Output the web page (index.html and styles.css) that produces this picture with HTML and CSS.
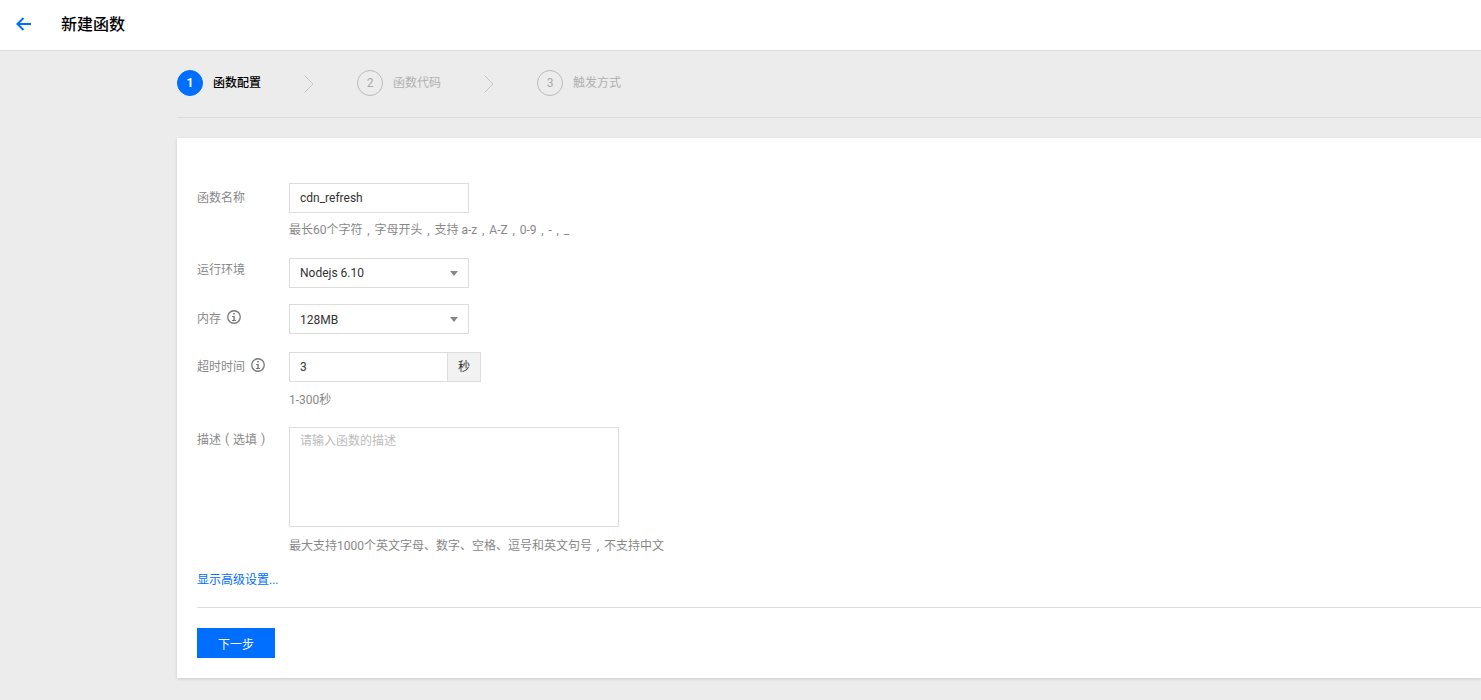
FILE: index.html
```html
<!DOCTYPE html>
<html lang="zh-CN">
<head>
<meta charset="utf-8">
<title>新建函数</title>
<link rel="stylesheet" href="styles.css">
</head>
<body>
<header class="topbar">
  <a class="back" aria-label="返回">
    <svg width="15" height="14" viewBox="0 0 15 14"><path d="M7.500 1 1.500 7l6 6M1.500 7H15" fill="none" stroke="#006eff" stroke-width="2"/></svg>
  </a>
  <h1 class="title">新建函数</h1>
</header>
<main class="content">
  <ol class="steps">
    <li class="step step-active"><span class="step-num">1</span><span class="step-text">函数配置</span></li>
    <li class="step-sep"><svg width="10" height="18" viewBox="0 0 10 18"><path d="M.5.5 9 9 .5 17.500" fill="none" stroke="#c4c4c4"/></svg></li>
    <li class="step"><span class="step-num">2</span><span class="step-text">函数代码</span></li>
    <li class="step-sep"><svg width="10" height="18" viewBox="0 0 10 18"><path d="M.5.5 9 9 .5 17.500" fill="none" stroke="#c4c4c4"/></svg></li>
    <li class="step"><span class="step-num">3</span><span class="step-text">触发方式</span></li>
  </ol>
  <section class="card">
    <div class="field field-a">
      <label class="label">函数名称</label>
      <div class="control">
        <div class="input w180">cdn_refresh</div>
        <p class="hint">最长60个字符<span class="pn">,</span>字母开头<span class="pn">,</span>支持 a-z<span class="pn">,</span>A-Z<span class="pn">,</span>0-9<span class="pn">,</span>-<span class="pn">,</span>_</p>
      </div>
    </div>
    <div class="field field-b">
      <label class="label">运行环境</label>
      <div class="control">
        <div class="input w180 select">Nodejs 6.10<i class="caret"></i></div>
      </div>
    </div>
    <div class="field field-c">
      <label class="label">内存<svg class="info" width="14" height="14" viewBox="0 0 14 14"><circle cx="7" cy="7" r="6.250" fill="none" stroke="#777" stroke-width="1.300"/><path d="M6.200 3h1.600v1.600H6.200zM5 6h2.800v3.900H9V11H5V9.900h1.400V7.100H5z" fill="#777"/></svg></label>
      <div class="control">
        <div class="input w180 select">128MB<i class="caret"></i></div>
      </div>
    </div>
    <div class="field field-e">
      <label class="label">超时时间<svg class="info" width="14" height="14" viewBox="0 0 14 14"><circle cx="7" cy="7" r="6.250" fill="none" stroke="#777" stroke-width="1.300"/><path d="M6.200 3h1.600v1.600H6.200zM5 6h2.800v3.900H9V11H5V9.900h1.400V7.100H5z" fill="#777"/></svg></label>
      <div class="control">
        <div class="group">
          <div class="input w159">3</div>
          <div class="addon">秒</div>
        </div>
        <p class="hint">1-300秒</p>
      </div>
    </div>
    <div class="field field-d">
      <label class="label">描述<span class="pn">(</span>选填<span class="pn">)</span></label>
      <div class="control">
        <div class="textarea">请输入函数的描述</div>
        <p class="hint">最大支持1000个英文字母、数字、空格、逗号和英文句号<span class="pn">,</span>不支持中文</p>
      </div>
    </div>
    <a class="more">显示高级设置...</a>
    <div class="actions">
      <button class="btn" type="button">下一步</button>
    </div>
  </section>
</main>
</body>
</html>
```
FILE: styles.css
```css
* { box-sizing: border-box; }
html, body { margin: 0; padding: 0; }
body {
  height: 700px;
  overflow: hidden;
  background: #ececec;
  font-family: Roboto, "Noto Sans CJK SC", sans-serif;
  font-size: 12px;
  color: #000;
}
.topbar {
  height: 51px;
  background: #fff;
  border-bottom: 1px solid #dcdcdc;
  display: flex;
  align-items: center;
  padding-left: 16px;
  padding-bottom: 1px;
}
.back { display: flex; width: 45px; margin-top: -2px; }
.title { margin: 0; font-size: 16px; font-weight: 500; line-height: 24px; color: #000; }
.content { margin-left: 177px; }
.steps {
  list-style: none;
  margin: 0;
  padding: 19px 0 0;
  height: 67px;
  border-bottom: 1px solid #dcdcdc;
  display: flex;
  align-items: flex-start;
}
.step { display: flex; align-items: center; height: 26px; color: #b0b0b0; }
.step-num {
  width: 26px;
  height: 26px;
  border: 1px solid #bbb;
  border-radius: 50%;
  display: flex;
  align-items: center;
  justify-content: center;
  font-size: 12px;
  font-weight: 400;
  color: #aaa;
  margin-right: 10px;
}
.step-text { width: 48px; line-height: 26px; }
.step-active { color: #000; }
.step-active .step-text { font-weight: 500; }
.step-active .step-num { background: #006eff; border-color: #006eff; color: #fff; font-weight: 700; }
.step-sep { width: 96px; height: 26px; padding: 5px 0 0 43px; display: flex; align-items: flex-start; }
.card {
  margin-top: 20px;
  height: 540px;
  background: #fff;
  box-shadow: 0 1px 3px rgba(0, 0, 0, .15);
  padding: 45px 0 0 20px;
}
.field { display: flex; align-items: flex-start; }
.field-a { margin-bottom: 19px; }
.field-b { margin-bottom: 16px; }
.field-c { margin-bottom: 18px; }
.field-d { margin-bottom: 16px; }
.field-e { margin-bottom: 18px; }
.label {
  width: 92px;
  flex: none;
  display: flex;
  align-items: center;
  height: 30px;
  padding-bottom: 3px;
  color: #888;
  white-space: nowrap;
}
.field-b .label { padding-bottom: 9px; }
.field-d .label { padding-bottom: 7px; }
.pn { display: inline-block; width: 12px; text-align: center; }
.info { margin-left: 6px; margin-top: -2px; }
.input {
  height: 30px;
  border: 1px solid #ddd;
  background: #fff;
  padding: 0 10px;
  line-height: 28px;
  color: #333;
  position: relative;
}
.field-c .input { line-height: 30px; }
.w180 { width: 180px; }
.w159 { width: 159px; }
.caret {
  position: absolute;
  right: 10px;
  top: 12px;
  width: 0;
  height: 0;
  border-left: 4.500px solid transparent;
  border-right: 4.500px solid transparent;
  border-top: 5px solid #888;
}
.group { display: flex; }
.addon {
  width: 34px;
  height: 30px;
  margin-left: -1px;
  border: 1px solid #ddd;
  background: #f2f2f2;
  text-align: center;
  line-height: 28px;
  color: #333;
}
.hint { margin: 8px 0 0; line-height: 18px; color: #888; white-space: nowrap; }
.field-e .hint { margin-top: 9px; }
.textarea {
  width: 330px;
  height: 100px;
  border: 1px solid #ddd;
  padding: 4px 10px;
  line-height: 18px;
  color: #bbb;
}
.field-d .hint { margin-top: 10px; }
.more { display: block; line-height: 18px; color: #006eff; }
.actions {
  margin-top: 18px;
  border-top: 1px solid #dcdcdc;
  padding-top: 20px;
}
.btn {
  display: block;
  width: 78px;
  height: 30px;
  border: 0;
  padding: 0;
  background: #006eff;
  color: #fff;
  font: inherit;
}
```
